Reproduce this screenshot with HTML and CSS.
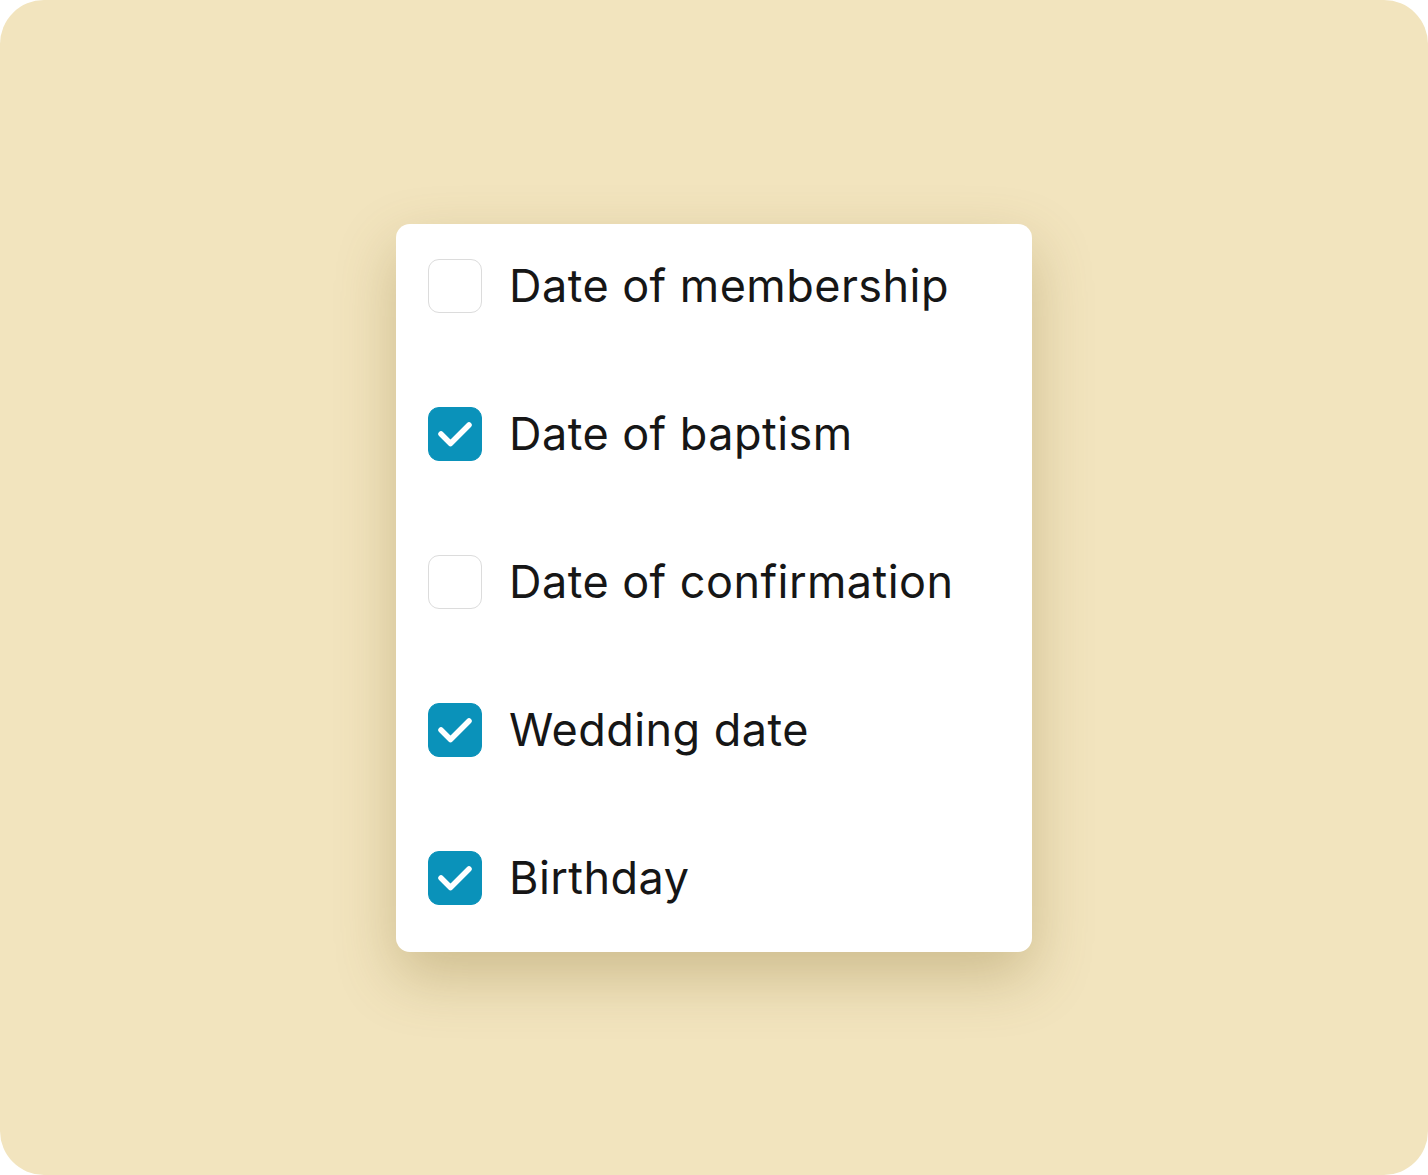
FILE: index.html
```html
<!DOCTYPE html>
<html lang="en">
<head>
  <meta charset="UTF-8">
  <title>Date fields</title>
  <link rel="stylesheet" href="styles.css">
</head>
<body>
  <div class="frame">
    <div class="card">
      <div class="option">
        <span class="box"></span>
        <span class="label">Date of membership</span>
      </div>
      <div class="option">
        <span class="box checked"><svg viewBox="0 0 54 54"><path d="M13 28 L22.5 37.5 L41 19"/></svg></span>
        <span class="label">Date of baptism</span>
      </div>
      <div class="option">
        <span class="box"></span>
        <span class="label">Date of confirmation</span>
      </div>
      <div class="option">
        <span class="box checked"><svg viewBox="0 0 54 54"><path d="M13 28 L22.5 37.5 L41 19"/></svg></span>
        <span class="label">Wedding date</span>
      </div>
      <div class="option">
        <span class="box checked"><svg viewBox="0 0 54 54"><path d="M13 28 L22.5 37.5 L41 19"/></svg></span>
        <span class="label">Birthday</span>
      </div>
    </div>
  </div>
</body>
</html>
```

FILE: styles.css
```css
html, body {
  margin: 0;
  padding: 0;
  background-color: #ffffff;
}
body {
  font-family: Inter, 'Noto Sans', sans-serif;
  color: #161616;
}
.frame {
  width: 1428px;
  height: 1175px;
  background-color: #f2e4be;
  border-radius: 44px;
  display: flex;
  align-items: center;
  justify-content: center;
}
.card {
  width: 636px;
  box-sizing: border-box;
  background-color: #ffffff;
  border-radius: 14px;
  padding: 35px 32px 47px;
  display: flex;
  flex-direction: column;
  gap: 94px;
  box-shadow: 0 24px 60px rgba(120, 95, 30, 0.3);
}
.option {
  display: flex;
  align-items: center;
  gap: 27px;
  height: 54px;
}
.box {
  width: 54px;
  height: 54px;
  box-sizing: border-box;
  border: 1.5px solid #dcdcdc;
  border-radius: 11px;
  flex-shrink: 0;
  background-color: #ffffff;
}
.box.checked {
  background-color: #0a92ba;
  border-color: #0a92ba;
}
.box svg {
  display: block;
  margin: -1.5px;
  width: 54px;
  height: 54px;
}
.box svg path {
  fill: none;
  stroke: #ffffff;
  stroke-width: 5.5;
  stroke-linecap: round;
  stroke-linejoin: round;
}
.label {
  font-size: 45px;
  letter-spacing: 0.45px;
  line-height: 1;
}
```
